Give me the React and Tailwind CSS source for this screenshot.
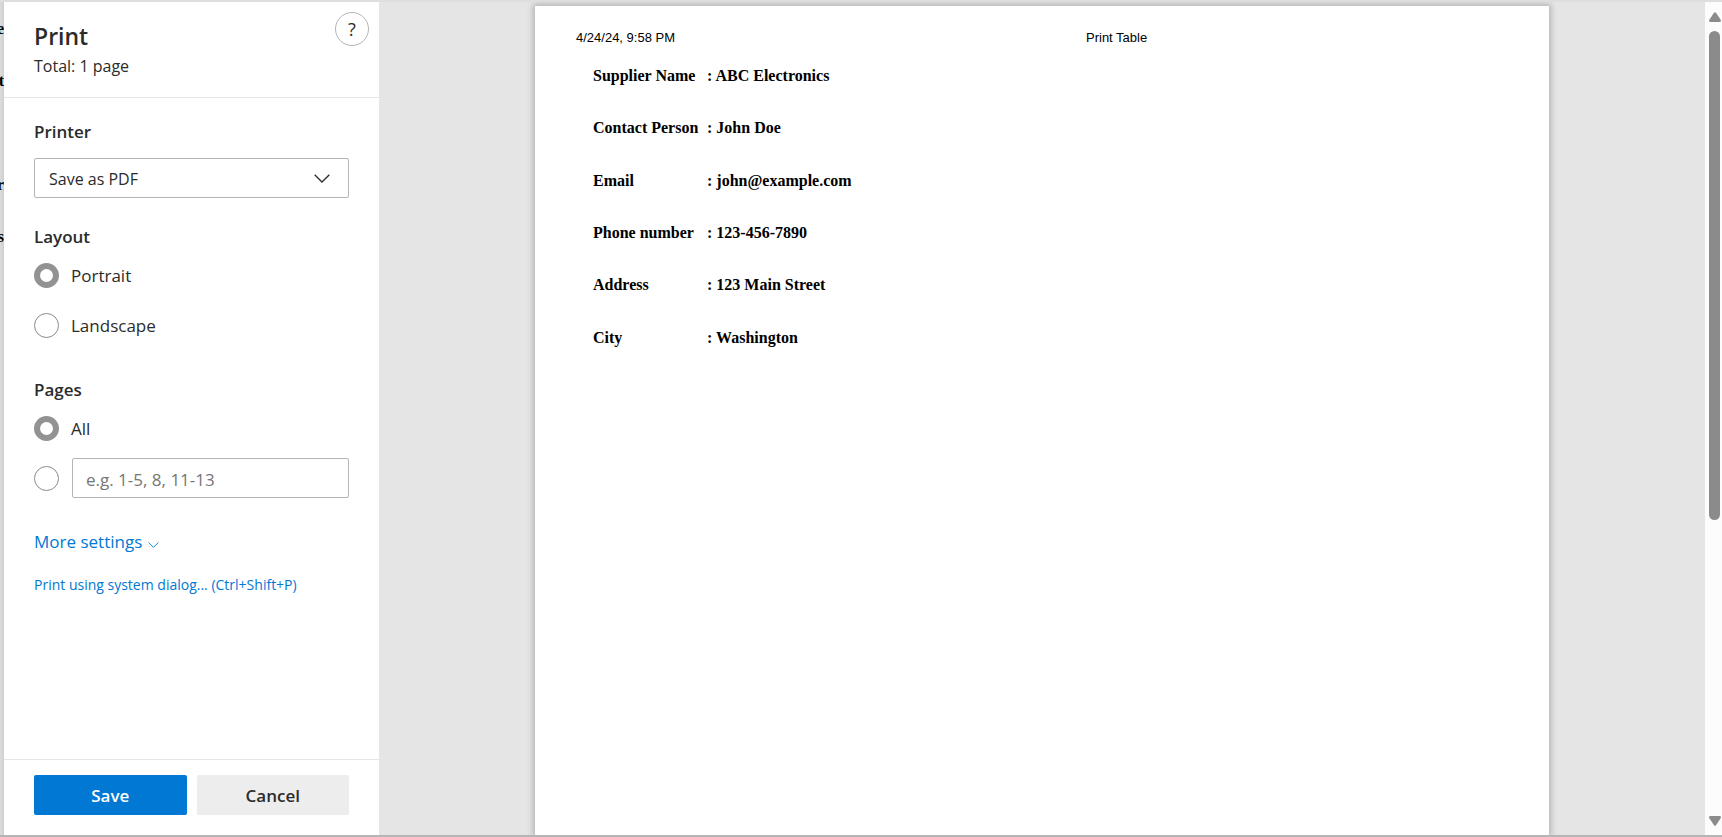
import React from "react";

const supplier = [
  ["Supplier Name", "ABC Electronics"],
  ["Contact Person", "John Doe"],
  ["Email", "john@example.com"],
  ["Phone number", "123-456-7890"],
  ["Address", "123 Main Street"],
  ["City", "Washington"],
];

const backdropLetters = ["e", "t", "", "r", "s"];

const radioClass =
  "m-0 size-[25px] shrink-0 appearance-none rounded-full border border-[#8a8a8a] bg-white checked:border-[6px] checked:border-[#929292]";

function Chevron({ className, strokeWidth }) {
  return (
    <svg viewBox="0 0 16 9" fill="none" stroke="currentColor" strokeWidth={strokeWidth} className={className} aria-hidden="true">
      <path d="M0.7 0.7 L8 8 L15.3 0.7" />
    </svg>
  );
}

function RadioRow({ name, label, defaultChecked }) {
  return (
    <label className="flex h-[50px] items-center gap-3">
      <input type="radio" name={name} defaultChecked={defaultChecked} className={radioClass} />
      <span className="pt-[2px]">{label}</span>
    </label>
  );
}

function Sidebar() {
  return (
    <aside className="flex w-[375px] shrink-0 flex-col bg-white font-['Open_Sans',sans-serif] text-[17px] leading-6 text-[#2b2b2b]">
      <header className="flex h-24 shrink-0 items-start justify-between border-b border-[#e5e5e5] pt-[10px] pr-[10px] pl-[30px]">
        <div className="pt-2">
          <h1 className="text-[23px] leading-8 font-semibold">Print</h1>
          <p className="text-[16px] leading-7">Total: 1 page</p>
        </div>
        <button type="button" aria-label="Help" className="flex size-[34px] items-center justify-center rounded-full border border-[#b5b5b5] text-[18px]">
          ?
        </button>
      </header>

      <form className="flex grow flex-col px-[30px] pt-[22px]">
        <label htmlFor="printer" className="font-semibold">Printer</label>
        <div className="mt-[14px] grid items-center">
          <select id="printer" className="col-start-1 row-start-1 h-10 w-full appearance-none rounded-xs border border-[#b5b5b5] bg-white px-[14px] pt-[2px] text-[16px]">
            <option>Save as PDF</option>
          </select>
          <Chevron strokeWidth="1.3" className="pointer-events-none col-start-1 row-start-1 mr-[19px] h-[9px] w-4 justify-self-end" />
        </div>

        <fieldset className="mt-[27px]">
          <legend className="font-semibold">Layout</legend>
          <div className="pt-[1px]">
            <RadioRow name="layout" label="Portrait" defaultChecked />
            <RadioRow name="layout" label="Landscape" />
          </div>
        </fieldset>

        <fieldset className="mt-7">
          <legend className="font-semibold">Pages</legend>
          <div className="pt-[1px]">
            <RadioRow name="pages" label="All" defaultChecked />
            <div className="flex h-[50px] items-center gap-[13px]">
              <input type="radio" name="pages" aria-label="Custom page range" className={radioClass} />
              <input
                type="text"
                aria-label="Page range"
                placeholder="e.g. 1-5, 8, 11-13"
                className="h-10 min-w-0 grow rounded-xs border border-[#b5b5b5] px-[13px] pt-[2px] placeholder:text-[#767676]"
              />
            </div>
          </div>
        </fieldset>

        <button type="button" className="mt-[27px] flex items-center gap-[6px] self-start text-[#0078d4]">
          More settings
          <Chevron strokeWidth="1.4" className="mt-[6px] h-[6px] w-[11px]" />
        </button>
        <a href="#system-dialog" className="mt-[19px] self-start text-[14px] text-[#0078d4]">
          Print using system dialog... (Ctrl+Shift+P)
        </a>
      </form>

      <footer className="grid h-[76px] shrink-0 grid-cols-2 gap-[10px] border-t border-[#e5e5e5] px-[30px] pt-[15px] font-semibold">
        <button type="button" className="h-10 rounded-xs bg-[#0078d4] pt-[2px] text-white">Save</button>
        <button type="button" className="h-10 rounded-xs bg-[#ededed] pt-[2px]">Cancel</button>
      </footer>
    </aside>
  );
}

function Preview() {
  return (
    <main className="flex min-w-0 grow justify-center overflow-hidden bg-[#e5e5e5] pt-1">
      <article className="w-[1014px] bg-white text-black shadow-[0_0_6px_2px_rgba(0,0,0,0.22)]">
        <div className="grid grid-cols-[510px_1fr] pt-[22px] pl-[41px] font-['Liberation_Sans',sans-serif] text-[13px] leading-5">
          <span>4/24/24, 9:58 PM</span>
          <span>Print Table</span>
        </div>
        <table className="mt-[2px] ml-[58px] h-[314px] font-['Liberation_Serif',serif] text-[16px] leading-5 font-bold">
          <tbody>
            {supplier.map(([label, value]) => (
              <tr key={label}>
                <th scope="row" className="w-[114px] p-0 text-left">{label}</th>
                <td className="p-0">: {value}</td>
              </tr>
            ))}
          </tbody>
        </table>
      </article>
    </main>
  );
}

function ScrollRail() {
  return (
    <div className="flex w-[17px] shrink-0 flex-col items-center bg-[#fcfcfc] pt-[10px] pb-[9px] pl-[2px] text-[#8b8b8b]" aria-hidden="true">
      <svg viewBox="0 0 12 10" className="h-[10px] w-3 shrink-0" fill="currentColor">
        <path d="M5 0.8 Q6 -0.4 7 0.8 L11.8 8 Q12.2 9.8 11 10 H1 Q-0.2 9.8 0.2 8 Z" />
      </svg>
      <div className="mt-[9px] mb-[9px] flex w-[11px] grow flex-col">
        <div className="h-[63%] rounded-full bg-[#8b8b8b]" />
      </div>
      <svg viewBox="0 0 12 10" className="h-[10px] w-3 shrink-0" fill="currentColor">
        <path d="M5 9.2 Q6 10.4 7 9.2 L11.8 2 Q12.2 0.2 11 0 H1 Q-0.2 0.2 0.2 2 Z" />
      </svg>
    </div>
  );
}

export default function App() {
  return (
    <div className="flex h-screen overflow-hidden border-t-2 border-b-2 border-t-[#dedede] border-b-[#b5b5b5]">
      <div className="flex w-1 shrink-0 flex-col overflow-hidden bg-linear-to-r from-[#dcdcdc] to-[#cfcfcf] pt-px font-['Liberation_Serif',serif] text-[16px] font-bold text-black" aria-hidden="true">
        {backdropLetters.map((letter, i) => (
          <span key={i} className="flex h-[52px] shrink-0 items-center justify-end">{letter}</span>
        ))}
      </div>
      <Sidebar />
      <Preview />
      <ScrollRail />
    </div>
  );
}
